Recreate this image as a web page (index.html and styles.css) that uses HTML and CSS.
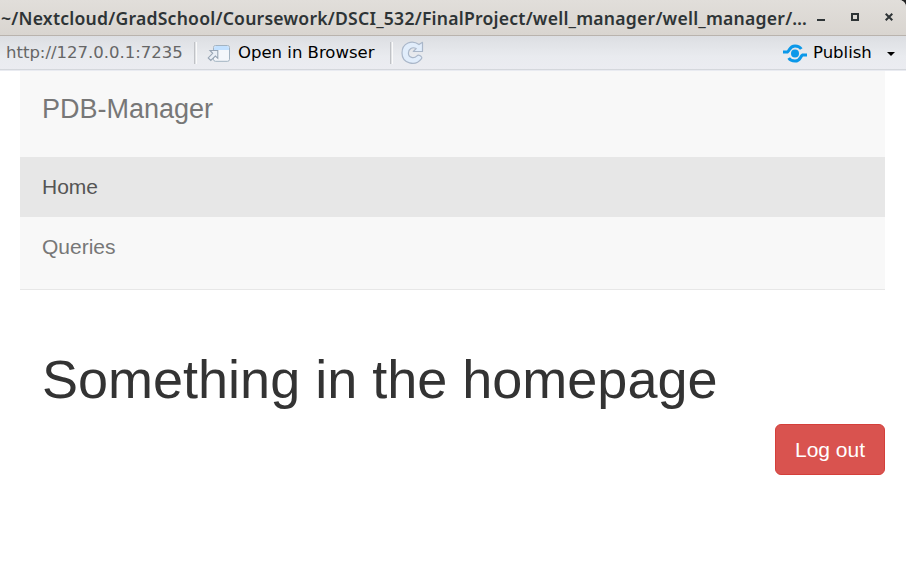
FILE: index.html
```html
<!DOCTYPE html>
<html lang="en">
<head>
<meta charset="utf-8">
<title>PDB-Manager</title>
<link rel="stylesheet" href="styles.css">
</head>
<body>
<header class="titlebar">
  <div class="window-title">~/Nextcloud/GradSchool/Coursework/DSCI_532/FinalProject/well_manager/well_manager/…</div>
  <div class="window-controls">
    <svg width="8" height="12" viewBox="0 0 8 12"><path d="M0 8h8" stroke="#2e3436" stroke-width="2"/></svg>
    <svg width="8" height="12" viewBox="0 0 8 12"><path d="M1 2h6v6H1z" fill="none" stroke="#2e3436" stroke-width="2"/></svg>
    <svg width="8" height="12" viewBox="0 0 8 12"><path d="M.7 1.7l6.6 6.6M7.3 1.7L.7 8.3" stroke="#2e3436" stroke-width="2"/></svg>
  </div>
</header>
<div class="toolbar">
  <span class="url">http://127.0.0.1:7235</span>
  <i class="divider first"></i>
  <svg class="open-icon" width="24" height="18" viewBox="0 0 24 18">
    <rect x="6.5" y="1.5" width="16" height="15.8" rx="2" fill="#f4f7fb" stroke="#a3b3c1"/>
    <path d="M7 6V4q0-2 2-2h11q2 0 2 2v2z" fill="#c3e1ff"/>
    <path d="M3 6.5h7.8v7.8L8.4 12l-4.6 4.5-2.6-2.6L5.7 9.3z" fill="#e9eff6" stroke="#98a5b4" stroke-width="1.1"/>
  </svg>
  <span class="open-label">Open in Browser</span>
  <i class="divider second"></i>
  <svg class="reload-icon" width="23" height="24" viewBox="0 0 23 24">
    <path d="M18 3.6L21.5 1.3v9.2h-9.2l2.9-2.9C11.3 5.4 7.4 8 7.4 12c0 4.8 5.6 6 8.6 2.8q1.2-1.2 2.8-.2l1.4 1q1.2 1 .1 2.3C14.6 25.6 1 22.7 1 12 1 1.8 11.2-1.6 18 3.6z" fill="#e1edfb" stroke="#aab7c9" stroke-width="1.2" stroke-linejoin="round"/>
  </svg>
  <svg class="publish-icon" width="24" height="20" viewBox="0 0 24 20">
    <g fill="none" stroke="#0b98e9" stroke-width="3"><path d="M0 9h4.5C7 7.5 6.5 2.9 12 2.9c3.2 0 5 1 6.3 3.1"/><path d="M24 12h-4.5c-2.5 1.5-2 6.1-7.5 6.1-3.2 0-5-1-6.3-3.1"/></g>
    <circle cx="12" cy="10.5" r="4" fill="#0b98e9"/>
  </svg>
  <span class="publish-label">Publish</span>
  <svg class="caret" width="8" height="4" viewBox="0 0 8 4"><path d="M0 0h8L4 4z" fill="#000"/></svg>
</div>
<main>
  <nav>
    <a class="brand">PDB-Manager</a>
    <a class="tab active">Home</a>
    <a class="tab">Queries</a>
  </nav>
  <h1>Something in the homepage</h1>
  <button class="logout">Log out</button>
</main>
</body>
</html>
```
FILE: styles.css
```css
* { box-sizing: border-box; }
body { margin: 0; height: 575px; overflow: hidden; background: #fff; font-family: "Liberation Sans", Arial, sans-serif; }
svg { display: block; flex: none; }
.titlebar { height: 36px; display: flex; align-items: center; background: linear-gradient(#e1deda, #d9d5d0); border-bottom: 1px solid #b9b3ad; border-top-right-radius: 7px; box-shadow: 5px -5px 0 #222; }
.window-title { width: 808px; padding: 1px 0 0 1px; flex: none; white-space: nowrap; font: 600 17.6px/34px "Noto Sans", sans-serif; letter-spacing: .215px; color: #2e3436; }
.window-controls { display: flex; margin-left: 9px; gap: 26px; }
.toolbar { height: 35px; display: flex; align-items: center; background: linear-gradient(#dcdee2, #e9ebef 60%, #ebecf1); border-bottom: 1px solid #e9ebf1; box-shadow: inset 0 -1px #d4d7dc; font: 16.5px/32px "DejaVu Sans", sans-serif; color: #000; white-space: nowrap; }
.url { width: 194px; padding-left: 6px; color: #666; }
.divider { width: 3px; height: 22px; background: linear-gradient(90deg, #c0c2c6 1px, #e1e3e6 1px 2px, #fafafa 2px); flex: none; }
.open-icon { margin-left: 10px; }
.open-label { width: 152px; margin-left: 7px; }
.reload-icon { margin-left: 8px; margin-top: -1px; }
.publish-icon { margin-left: auto; }
.publish-label { margin-left: 6px; width: 74px; }
.caret { margin: 1px 11px 0 0; }
main { padding: 0 21px 0 20px; display: flex; flex-direction: column; }
nav { height: 219px; background: #f8f8f8; border-bottom: 1px solid #e7e7e7; color: #777; }
nav a { display: block; padding-left: 22px; }
.brand { height: 86px; font-size: 27px; line-height: 76px; }
.tab { height: 60px; font-size: 21px; line-height: 60px; }
.active { background: #e7e7e7; color: #555; }
h1 { margin: 60px 0 0 22px; font-size: 54px; line-height: 59px; font-weight: 400; color: #333; }
.logout { align-self: flex-end; margin-top: 15px; width: 110px; height: 51px; padding: 0; border: 1px solid #d43f3a; border-radius: 6px; background: #d9534f; color: #fff; font: 21px "Liberation Sans", Arial, sans-serif; }
```
